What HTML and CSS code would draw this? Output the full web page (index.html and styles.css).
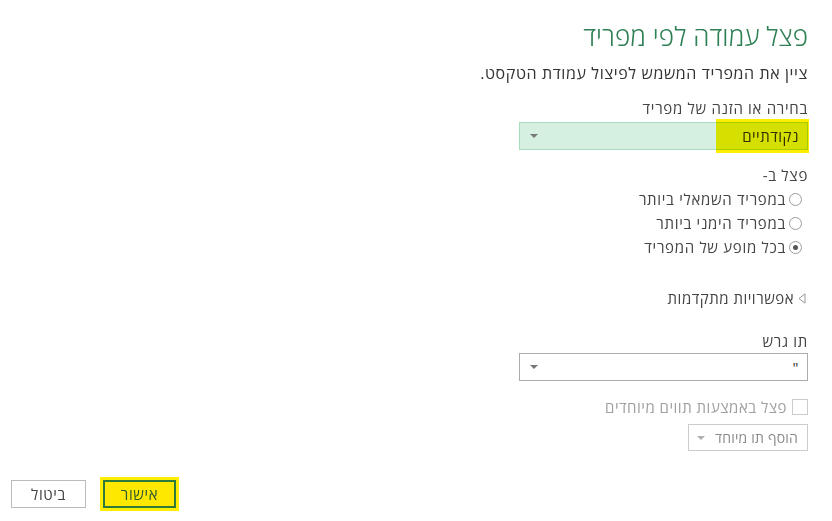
FILE: index.html
```html
<!DOCTYPE html>
<html lang="he" dir="rtl">
<head>
<meta charset="utf-8">
<link rel="stylesheet" href="styles.css">
</head>
<body>
<div class="dialog">
  <div class="main">
    <h1 class="title">פצל עמודה לפי מפריד</h1>
    <p class="subtitle">ציין את המפריד המשמש לפיצול עמודת הטקסט.</p>

    <div class="label first">בחירה או הזנה של מפריד</div>
    <div class="select select-green">
      <span class="select-value">נקודתיים</span>
      <span class="caret"></span>
      <span class="marker"></span>
    </div>

    <div class="label split">פצל ב-</div>
    <div class="radios">
      <div class="radio-row"><span class="radio"></span><span>במפריד השמאלי ביותר</span></div>
      <div class="radio-row"><span class="radio"></span><span>במפריד הימני ביותר</span></div>
      <div class="radio-row"><span class="radio checked"></span><span>בכל מופע של המפריד</span></div>
    </div>

    <div class="advanced">
      <svg class="adv-icon" width="8" height="11" viewBox="0 0 8 11"><polygon points="7,0.8 7,10.2 1,5.5" fill="none" stroke="#9a9a9a" stroke-width="1"/></svg>
      <span>אפשרויות מתקדמות</span>
    </div>

    <div class="label quote">תו גרש</div>
    <div class="select select-white">
      <span class="select-value">"</span>
      <span class="caret"></span>
    </div>

    <div class="check-row">
      <span class="checkbox"></span>
      <span>פצל באמצעות תווים מיוחדים</span>
    </div>

    <div class="add-btn">
      <span>הוסף תו מיוחד</span>
      <span class="caret light"></span>
    </div>
  </div>

  <div class="footer">
    <button class="btn btn-ok">אישור</button>
    <button class="btn btn-cancel">ביטול</button>
  </div>
</div>
</body>
</html>
```

FILE: styles.css
```css
html, body {
  margin: 0;
  padding: 0;
  background: #ffffff;
}

body {
  font-family: "Open Sans", "Liberation Sans", "DejaVu Sans", sans-serif;
  color: #444444;
  font-size: 15px;
  letter-spacing: 0.7px;
  width: 832px;
  height: 521px;
  overflow: hidden;
}

.dialog {
  display: flex;
  flex-direction: column;
}

.main {
  display: flex;
  flex-direction: column;
  align-items: flex-start;
  padding: 18px 24px 0 24px;
}

.title {
  margin: 0;
  font-size: 26px;
  line-height: 36px;
  font-weight: 300;
  letter-spacing: 0.1px;
  color: #2f8055;
}

.subtitle {
  margin: 9px 0 0 0;
  font-size: 16px;
  letter-spacing: 0.6px;
  line-height: 20px;
  color: #333333;
}

.label {
  font-size: 15px;
  line-height: 20px;
  color: #444444;
}

.label.first { margin-top: 15px; }
.label.split { margin-top: 15px; }
.label.quote { margin-top: 23px; }

.select {
  position: relative;
  width: 289px;
  height: 28px;
  box-sizing: border-box;
  display: flex;
  align-items: center;
  justify-content: space-between;
  padding: 0 8px 0 10px;
  margin-top: 4px;
}

.select-green {
  background: #d5f0e0;
  border: 1px solid #a7dcbd;
}

.select-white {
  background: #ffffff;
  border: 1px solid #ababab;
  margin-top: 2px;
}

.select-value {
  font-size: 15px;
  letter-spacing: 0.5px;
  color: #333333;
}

.caret {
  width: 0;
  height: 0;
  border-left: 4px solid transparent;
  border-right: 4px solid transparent;
  border-top: 4px solid #777777;
}

.caret.light {
  border-top-color: #b0b0b0;
}

.marker {
  position: absolute;
  right: -2px;
  top: -4px;
  width: 93px;
  height: 34px;
  background: #ffee00;
  mix-blend-mode: multiply;
}

.radios {
  display: flex;
  flex-direction: column;
  margin-top: 2px;
  padding-right: 6px;
}

.radio-row {
  display: flex;
  align-items: center;
  height: 24px;
  font-size: 15px;
  color: #444444;
}

.radio {
  width: 11px;
  height: 11px;
  border: 1px solid #9d9d9d;
  border-radius: 50%;
  margin-left: 3px;
  position: relative;
  background: #ffffff;
  flex-shrink: 0;
}

.radio.checked::after {
  content: "";
  position: absolute;
  width: 5px;
  height: 5px;
  border-radius: 50%;
  background: #555555;
  top: 3px;
  left: 3px;
}

.advanced {
  display: flex;
  align-items: center;
  margin-top: 29px;
  line-height: 20px;
  font-size: 15px;
  letter-spacing: 0.5px;
  color: #444444;
  padding-right: 2px;
}

.adv-icon {
  margin-left: 4px;
}

.check-row {
  display: flex;
  align-items: center;
  margin-top: 16px;
  line-height: 20px;
  font-size: 15px;
  letter-spacing: 0.5px;
  color: #a0a0a0;
}

.checkbox {
  width: 14px;
  height: 14px;
  border: 1px solid #cccccc;
  margin-left: 5px;
  background: #ffffff;
}

.add-btn {
  margin-top: 7px;
  height: 27px;
  width: 120px;
  box-sizing: border-box;
  border: 1px solid #cccccc;
  display: flex;
  align-items: center;
  justify-content: space-between;
  padding: 0 9px 0 8px;
  font-size: 14px;
  letter-spacing: 0.2px;
  color: #8a8a8a;
}

.footer {
  display: flex;
  justify-content: flex-end;
  gap: 17px;
  padding: 0 11px;
  margin-top: 29px;
}

.btn {
  font-family: "Open Sans", "Liberation Sans", "DejaVu Sans", sans-serif;
  font-size: 15px;
  letter-spacing: 0.6px;
  height: 28px;
  width: 75px;
  box-sizing: border-box;
  background: #ffffff;
  border: 1px solid #bbbbbb;
  color: #444444;
  padding: 0;
}

.btn-ok {
  width: 73px;
  background: #ffe800;
  border: 2px solid #2e7a3a;
  color: #2e5a2e;
  box-shadow: 0 0 0 3px #ffee00;
}
```
